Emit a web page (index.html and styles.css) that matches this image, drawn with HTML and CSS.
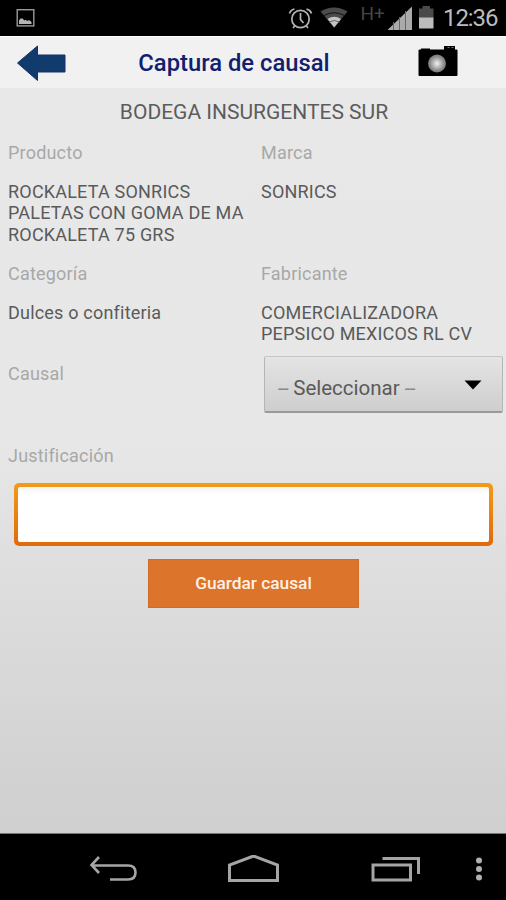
FILE: index.html
```html
<!DOCTYPE html>
<html lang="es">
<head>
  <meta charset="UTF-8">
  <title>Captura de causal</title>
  <link rel="stylesheet" href="styles.css">
</head>
<body>
  <div class="screen">
    <div class="status-bar">
      <svg class="icon-picture" width="20" height="20" viewBox="0 0 20 20">
        <rect x="1.2" y="1.700" width="16.6" height="16.2" fill="none" stroke="#9a9a9a" stroke-width="1.4"/>
        <path d="M3 16V12.500l1.500-2h2l2 2 1-.8 2 1.300 1.500-1 2.500 2V16z" fill="#b5b5b5"/>
      </svg>
      <svg class="status-icons" width="156" height="36" viewBox="288 0 156 36">
        <!-- alarm -->
        <g fill="none" stroke="#b4b4b4" stroke-width="1.700">
          <circle cx="300.500" cy="19" r="8.700"/>
          <path d="M300.500 13v6.500l3 3.500M289.500 13.500q1-3.500 5-4.500M311.500 13.500q-1-3.500-5-4.500M295 25.500l-2 2.500M306 25.500l2 2.500"/>
        </g>
        <!-- wifi -->
        <path d="M320.500 11.500q13.500-8 27 0L334.200 27.500z" fill="#4b4b4b"/>
        <path d="M324 15.500q10.200-5.500 20.500 0" fill="none" stroke="#111" stroke-width="1"/>
        <path d="M327.500 19q6.700-4.500 13.500 0L334.200 27.500z" fill="#c4c4c4"/>
        <path d="M329 22q5.200-3 10.500 0" fill="none" stroke="#666" stroke-width="1"/>
        <text class="network" x="360.500" y="19.500">H+</text>
        <!-- signal -->
        <path d="M387.500 30L412 6.500V30z" fill="#aaa"/>
        <path d="M393.500 22v8M399.500 17v13M405.500 11v19" stroke="#666" stroke-width="1"/>
        <!-- battery -->
        <path d="M419 18V8.500h3.500V6h7.500v2.500h3.500V18z" fill="#4a4a4a"/>
        <path d="M419 17.500h14.500V28.500H419z" fill="#bcbcbc"/>
      </svg>
      <span class="clock">12:36</span>
    </div>

    <div class="header">
      <svg class="icon-arrow" width="50" height="38" viewBox="0 0 50 38">
        <path d="M1.500 19L21.500 2v9H49v17H21.500v8.500z" fill="#123b6d" stroke="#15306a" stroke-width="1"/>
      </svg>
      <h1>Captura de causal</h1>
      <svg class="icon-camera" width="40" height="34" viewBox="0 0 40 34">
        <defs>
          <radialGradient id="lens">
            <stop offset="0" stop-color="#f2f2f2"/>
            <stop offset=".5" stop-color="#b0b0b0"/>
            <stop offset="1" stop-color="#777"/>
          </radialGradient>
        </defs>
        <path d="M1.500 5.500H3V4.500h9v1h14V2h11v3.500h1.500q1 0 1 1V31q0 1-1 1h-37q-1 0-1-1V6.500q0-1 1-1z" fill="#000"/>
        <path d="M29.500 3.500h2M33.500 3.500h2" stroke="#777"/>
        <circle cx="19" cy="19.500" r="9" fill="url(#lens)"/>
        <circle cx="19" cy="19.500" r="7" fill="none" stroke="#888" stroke-width=".8"/>
      </svg>
    </div>

    <div class="content">
      <h2>BODEGA INSURGENTES SUR</h2>

      <div class="details">
        <div class="label">Producto</div>
        <div class="label">Marca</div>
        <div class="value">ROCKALETA SONRICS<br>PALETAS CON GOMA DE MA<br>ROCKALETA 75 GRS</div>
        <div class="value">SONRICS</div>
        <div class="label">Categoría</div>
        <div class="label">Fabricante</div>
        <div class="value">Dulces o confiteria</div>
        <div class="value">COMERCIALIZADORA<br>PEPSICO MEXICOS RL CV</div>
      </div>

      <div class="causal-row">
        <div class="label">Causal</div>
        <button class="spinner" type="button">
          <span><span class="dashes">--</span> Seleccionar <span class="dashes">--</span></span>
          <svg width="18" height="10" viewBox="0 0 18 10"><path d="M.5.500h17L9 9.500z" fill="#000"/></svg>
        </button>
      </div>

      <label class="label" for="justificacion">Justificación</label>
      <div class="field">
        <input type="text" id="justificacion">
      </div>
      <button class="save" type="button">Guardar causal</button>
    </div>

    <div class="nav-bar">
      <svg class="nav-back" width="50" height="30" viewBox="0 0 50 30">
        <path d="M11 2L3.500 10l7.500 8M3.500 10.500H40q7.500 0 7.500 7t-7.500 7H22" fill="none" stroke="#a5a5a5" stroke-width="2.600"/>
      </svg>
      <svg class="nav-home" width="54" height="30" viewBox="0 0 54 30">
        <path d="M2.500 25.500V10L26.500 1 50.500 10v15.500z" fill="none" stroke="#a5a5a5" stroke-width="3"/>
      </svg>
      <svg class="nav-recent" width="52" height="30" viewBox="0 0 52 30">
        <path d="M3 10h37.500v15H3zM12.500 3.500h36V19" fill="none" stroke="#a5a5a5" stroke-width="3"/>
      </svg>
      <svg class="nav-menu" width="8" height="30" viewBox="0 0 8 30">
        <g fill="#b0b0b0">
          <circle cx="4" cy="5.500" r="3"/>
          <circle cx="4" cy="14" r="3"/>
          <circle cx="4" cy="22.500" r="3"/>
        </g>
      </svg>
    </div>
  </div>
</body>
</html>
```

FILE: styles.css
```css
body {
  margin: 0;
  font-family: Roboto, sans-serif;
  background: #000;
}
* {
  box-sizing: border-box;
}
svg {
  display: block;
  flex: none;
}
.screen {
  display: flex;
  flex-direction: column;
  width: 506px;
  height: 900px;
  overflow: hidden;
}
.status-bar {
  display: flex;
  height: 36px;
  background: #000;
}
.icon-picture {
  margin: 8px 0 0 16px;
}
.status-icons {
  margin-left: auto;
}
.network {
  font-size: 19px;
  fill: #454545;
}
.clock {
  width: 62px;
  line-height: 37px;
  font-size: 24px;
  letter-spacing: -1.1px;
  text-indent: -1px;
  white-space: nowrap;
  color: #bcbcbc;
}
.header {
  display: flex;
  align-items: flex-start;
  height: 52px;
  padding-left: 16px;
  background: #f1f1f1;
  border-top: 1px solid #fff;
}
.icon-arrow {
  margin-top: 7px;
}
.header h1 {
  width: 336px;
  margin: 0 16px 0 0;
  line-height: 52px;
  text-align: center;
  font-size: 23.8px;
  font-weight: 500;
  color: #10206f;
}
.icon-camera {
  margin-top: 7px;
}
.content {
  display: flex;
  flex-direction: column;
  height: 745px;
  background: linear-gradient(#e8e8e8 0, #e7e7e7 48%, #dedede 65%, #cfcfcf 100%);
}
.content h2 {
  margin: 12px 0 18px;
  padding-left: 2px;
  line-height: 24px;
  text-align: center;
  font-size: 21px;
  font-weight: 400;
  color: #5c5c5c;
}
.details {
  display: grid;
  grid-template-columns: 253px 253px;
  row-gap: 18px;
}
.label, .value {
  padding-left: 8px;
  line-height: 21.2px;
  font-size: 18px;
  letter-spacing: 0.2px;
  white-space: nowrap;
}
.label {
  color: #a8a8a8;
}
.value {
  color: #5a5a5a;
}
.causal-row {
  display: flex;
  justify-content: space-between;
  height: 56px;
  margin: 12px 3px 33px 0;
}
.causal-row .label {
  padding-top: 7px;
}
.spinner {
  display: flex;
  align-items: center;
  justify-content: space-between;
  width: 239px;
  height: 57px;
  padding: 7px 20px 0 13px;
  border: 1px solid #b5b5b5;
  border-top-color: #c6c6c6;
  border-bottom: 2px solid #999;
  border-radius: 2px;
  background: linear-gradient(#e4e4e4, #cecece);
  font-family: inherit;
  font-size: 20.5px;
  color: #5a5a5a;
}
.spinner .dashes {
  color: #888;
  letter-spacing: -0.6px;
}
.spinner svg {
  margin-bottom: 5px;
}
.field {
  height: 63px;
  margin: 16px 13px 0 14px;
  padding: 4px;
  border-radius: 5px;
  background: linear-gradient(#f39a19, #e06a0c);
}
.field input {
  display: block;
  width: 100%;
  height: 55px;
  border: none;
  border-radius: 2px;
  outline: none;
  background: linear-gradient(#f5f5f5, #fff 8px);
}
.save {
  width: 211px;
  height: 49px;
  margin: 13px 0 0 148px;
  border: 1px solid #d26d28;
  background: #dd742c;
  font-family: inherit;
  font-size: 17.3px;
  font-weight: 500;
  color: #fff0e4;
}
.nav-bar {
  display: flex;
  flex: 1;
  padding-top: 21px;
  border-top: 1px solid #777;
  background: #000;
}
.nav-back {
  margin-left: 88px;
}
.nav-home {
  margin-left: 89px;
}
.nav-recent {
  margin-left: 89px;
}
.nav-menu {
  margin-left: 53px;
}
```
